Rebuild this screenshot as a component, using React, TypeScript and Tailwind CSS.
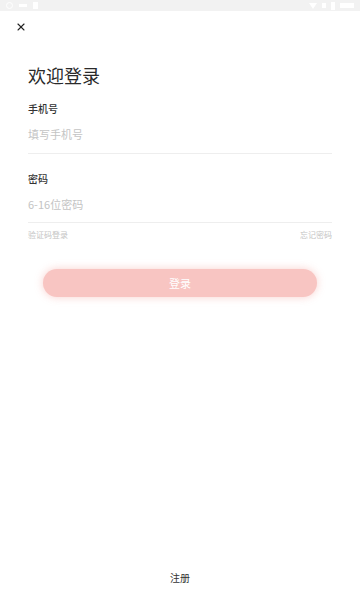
import { X } from 'lucide-react';

export default function App() {
  return (
    <div
      className="relative flex h-[600px] w-[360px] flex-col bg-white text-[#222]"
      style={{ fontFamily: '"Noto Sans CJK SC", "Noto Sans", sans-serif' }}
    >
      {/* Status bar */}
      <div className="flex h-[11px] items-center justify-between bg-[#f2f2f2] px-[6px]">
        <div className="flex items-center gap-[6px]">
          <div className="h-[7px] w-[7px] rounded-full border border-white" />
          <div className="h-[3px] w-[8px] bg-white" />
          <div className="h-[7px] w-[5px] bg-white" />
        </div>
        <div className="flex items-center gap-[5px]">
          <div className="h-0 w-0 border-x-[4px] border-t-[6px] border-x-transparent border-t-white" />
          <div className="h-[5px] w-[4px] bg-white" />
          <div className="h-[8px] w-[4px] bg-white" />
          <div className="h-[5px] w-[14px] bg-white" />
        </div>
      </div>

      {/* Close */}
      <div className="px-[15px] pt-[10px]">
        <X className="h-[12px] w-[12px] text-[#222]" strokeWidth={2.2} />
      </div>

      <div className="px-[28px]">
        <h1 className="mt-[30px] text-[18px] leading-[24px] text-[#2a2a2a]">欢迎登录</h1>

        <div className="mt-[15px] text-[10px] font-medium leading-[14px] text-[#333]">手机号</div>
        <div className="flex h-[38px] items-center border-b border-[#eeeeee] text-[11px] text-[#c4c4c4]">
          填写手机号
        </div>

        <div className="mt-[18px] text-[10px] font-medium leading-[14px] text-[#333]">密码</div>
        <div className="flex h-[37px] items-center border-b border-[#eeeeee] text-[11px] text-[#c4c4c4]">
          6-16位密码
        </div>

        <div className="mt-[6px] flex items-center justify-between text-[8px] leading-[12px] text-[#c4c4c4]">
          <span>验证码登录</span>
          <span>忘记密码</span>
        </div>
      </div>

      <div className="mt-[28px] px-[43px]">
        <button
          type="button"
          className="flex h-[28px] w-full items-center justify-center rounded-full bg-[#f8c5c2] text-[11px] text-white shadow-[0_0_8px_rgba(248,197,194,0.8)]"
        >
          登录
        </button>
      </div>

      <div className="mt-auto pb-[15px] text-center text-[10px] leading-[14px] text-[#333]">注册</div>
    </div>
  );
}
